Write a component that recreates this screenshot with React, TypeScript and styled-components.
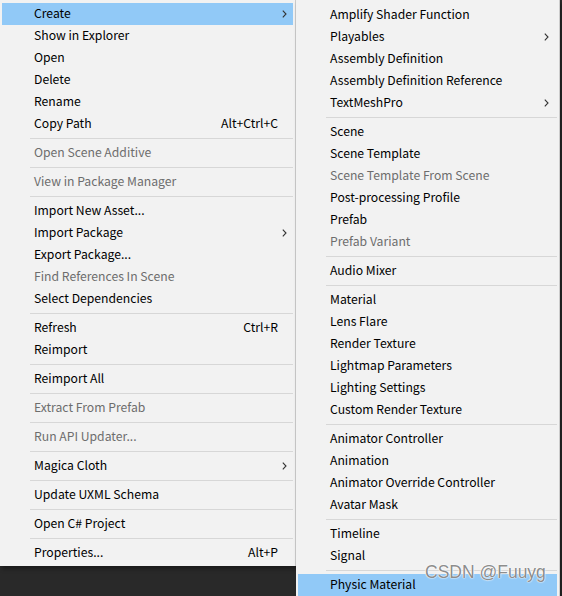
import React from 'react'
import styled, { createGlobalStyle } from 'styled-components'

const GlobalStyle = createGlobalStyle`
  html, body {
    margin: 0;
    padding: 0;
    background: #292929;
    overflow: hidden;
  }
  body {
    font-family: 'Noto Sans CJK SC', 'Noto Sans', sans-serif;
  }
`

type Item = { label: string; shortcut?: string; sub?: boolean; disabled?: boolean; active?: boolean } | 'sep'

const assetMenu: Item[] = [
  { label: 'Create', sub: true, active: true },
  { label: 'Show in Explorer' },
  { label: 'Open' },
  { label: 'Delete' },
  { label: 'Rename' },
  { label: 'Copy Path', shortcut: 'Alt+Ctrl+C' },
  'sep',
  { label: 'Open Scene Additive', disabled: true },
  'sep',
  { label: 'View in Package Manager', disabled: true },
  'sep',
  { label: 'Import New Asset...' },
  { label: 'Import Package', sub: true },
  { label: 'Export Package...' },
  { label: 'Find References In Scene', disabled: true },
  { label: 'Select Dependencies' },
  'sep',
  { label: 'Refresh', shortcut: 'Ctrl+R' },
  { label: 'Reimport' },
  'sep',
  { label: 'Reimport All' },
  'sep',
  { label: 'Extract From Prefab', disabled: true },
  'sep',
  { label: 'Run API Updater...', disabled: true },
  'sep',
  { label: 'Magica Cloth', sub: true },
  'sep',
  { label: 'Update UXML Schema' },
  'sep',
  { label: 'Open C# Project' },
  'sep',
  { label: 'Properties...', shortcut: 'Alt+P' },
]

const createMenu: Item[] = [
  { label: 'Amplify Shader Function' },
  { label: 'Playables', sub: true },
  { label: 'Assembly Definition' },
  { label: 'Assembly Definition Reference' },
  { label: 'TextMeshPro', sub: true },
  'sep',
  { label: 'Scene' },
  { label: 'Scene Template' },
  { label: 'Scene Template From Scene', disabled: true },
  { label: 'Post-processing Profile' },
  { label: 'Prefab' },
  { label: 'Prefab Variant', disabled: true },
  'sep',
  { label: 'Audio Mixer' },
  'sep',
  { label: 'Material' },
  { label: 'Lens Flare' },
  { label: 'Render Texture' },
  { label: 'Lightmap Parameters' },
  { label: 'Lighting Settings' },
  { label: 'Custom Render Texture' },
  'sep',
  { label: 'Animator Controller' },
  { label: 'Animation' },
  { label: 'Animator Override Controller' },
  { label: 'Avatar Mask' },
  'sep',
  { label: 'Timeline' },
  { label: 'Signal' },
  'sep',
  { label: 'Physic Material', active: true },
]

const Screen = styled.div`
  position: relative;
  display: flex;
  align-items: flex-start;
  width: 562px;
  height: 596px;
  overflow: hidden;
`

const Menu = styled.ul<{ $top: number; $width: number; $chevronRight: number }>`
  list-style: none;
  margin: 0;
  box-sizing: border-box;
  width: ${({ $width }) => $width}px;
  padding: ${({ $top }) => $top}px 2px 2px 2px;
  background: #f2f2f2;
  border-right: 1px solid #cccccc;
  box-shadow: 2px 3px 4px rgba(0, 0, 0, 0.35);
  flex-shrink: 0;
  --chevron-right: ${({ $chevronRight }) => $chevronRight}px;
`

const Row = styled.li<{ $active?: boolean; $disabled?: boolean }>`
  display: flex;
  align-items: center;
  box-sizing: border-box;
  height: 22px;
  padding: 0 15px 1px 32px;
  position: relative;
  font-size: 12.2px;
  line-height: 21px;
  color: ${({ $disabled }) => ($disabled ? '#6d6d6d' : '#000')};
  background: ${({ $active }) => ($active ? '#91c9f7' : 'transparent')};
  white-space: nowrap;
`

const Label = styled.span`
  flex: 1;
`

const Shortcut = styled.span`
  margin-left: 20px;
`

const Chevron = styled.svg`
  position: absolute;
  right: var(--chevron-right);
  top: 7px;
  width: 5px;
  height: 8px;
`

const Separator = styled.li`
  height: 7px;
  display: flex;
  align-items: center;
  padding-left: 28px;

  &::after {
    content: '';
    flex: 1;
    height: 1px;
    background: #d7d7d7;
  }
`

const Watermark = styled.div`
  position: absolute;
  left: 425px;
  top: 562px;
  font-family: 'Liberation Sans', Arial, sans-serif;
  font-size: 17.5px;
  color: rgba(125, 125, 125, 0.9);
  text-shadow: 0 0 1px #fff, 0 0 1px #fff, 0 0 2px rgba(255, 255, 255, 0.9);
  pointer-events: none;
`

function MenuList({ items, top, width, chevronRight }: { items: Item[]; top: number; width: number; chevronRight: number }) {
  return (
    <Menu $top={top} $width={width} $chevronRight={chevronRight}>
      {items.map((item, i) =>
        item === 'sep' ? (
          <Separator key={i} />
        ) : (
          <Row key={i} $active={item.active} $disabled={item.disabled}>
            <Label>{item.label}</Label>
            {item.shortcut && <Shortcut>{item.shortcut}</Shortcut>}
            {item.sub && (
              <Chevron viewBox="0 0 5 8">
                <path d="M0.8 0.6 L4 4 L0.8 7.4" fill="none" stroke="#333" strokeWidth="1.1" />
              </Chevron>
            )}
          </Row>
        )
      )}
    </Menu>
  )
}

export default function App() {
  return (
    <>
      <GlobalStyle />
      <Screen>
        <MenuList items={assetMenu} top={3} width={296} chevronRight={6} />
        <MenuList items={createMenu} top={4} width={264} chevronRight={8} />
        <Watermark>CSDN @Fuuyg</Watermark>
      </Screen>
    </>
  )
}
